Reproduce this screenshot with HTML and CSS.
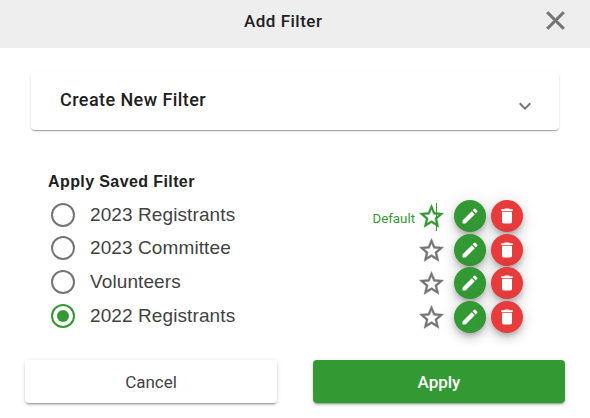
FILE: index.html
```html
<!DOCTYPE html>
<html lang="en">
<head>
<meta charset="utf-8">
<title>Add Filter</title>
<link rel="stylesheet" href="styles.css">
</head>
<body>
<main class="dialog">
  <header class="head">
    <h1 class="title">Add Filter</h1>
    <button class="close" aria-label="Close">
      <svg viewBox="0 0 24 24" width="31" height="31"><path fill="#757575" d="M19 6.41 17.59 5 12 10.59 6.41 5 5 6.41 10.59 12 5 17.59 6.41 19 12 13.41 17.59 19 19 17.59 13.41 12z" stroke="#757575" stroke-width=".5"/></svg>
    </button>
  </header>
  <section class="card">
    <span class="card-title">Create New Filter</span>
    <svg class="chev" viewBox="0 0 24 24" width="24" height="24"><path fill="#757575" d="M16.59 8.59 12 13.17 7.41 8.59 6 10l6 6 6-6z"/></svg>
  </section>
  <section class="saved">
    <h2 class="saved-title">Apply Saved Filter</h2>
    <div class="rows">
      <div class="row">
        <span class="radio"></span><span class="label">2023 Registrants</span>
        <span class="default">Default</span>
        <span class="star-mark">
          <svg class="star star-on" viewBox="0 0 24 24" width="29" height="29"><path d="M22 9.24l-7.19-.62L12 2 9.19 8.63 2 9.24l5.46 4.73L5.82 21 12 17.27 18.18 21l-1.63-7.03L22 9.24zM12 15.4l-3.76 2.27 1-4.28-3.32-2.88 4.38-.38L12 6.1l1.71 4.04 4.38.38-3.32 2.88 1 4.28L12 15.4z"/></svg>
        </span>
        <button class="fab edit" aria-label="Edit"><svg viewBox="0 0 24 24" width="20" height="20"><path d="M3 17.25V21h3.75L17.81 9.94l-3.75-3.75L3 17.25zM20.71 7.04a1 1 0 0 0 0-1.41l-2.34-2.34a1 1 0 0 0-1.41 0l-1.83 1.83 3.75 3.75 1.83-1.83z"/></svg></button>
        <button class="fab del" aria-label="Delete"><svg viewBox="0 0 24 24" width="20" height="20"><path d="M6 19c0 1.1.9 2 2 2h8c1.1 0 2-.9 2-2V7H6v12zM19 4h-3.5l-1-1h-5l-1 1H5v2h14V4z"/></svg></button>
      </div>
      <div class="row">
        <span class="radio"></span><span class="label">2023 Committee</span>
        <svg class="star" viewBox="0 0 24 24" width="29" height="29"><path d="M22 9.24l-7.19-.62L12 2 9.19 8.63 2 9.24l5.46 4.73L5.82 21 12 17.27 18.18 21l-1.63-7.03L22 9.24zM12 15.4l-3.76 2.27 1-4.28-3.32-2.88 4.38-.38L12 6.1l1.71 4.04 4.38.38-3.32 2.88 1 4.28L12 15.4z"/></svg>
        <button class="fab edit" aria-label="Edit"><svg viewBox="0 0 24 24" width="20" height="20"><path d="M3 17.25V21h3.75L17.81 9.94l-3.75-3.75L3 17.25zM20.71 7.04a1 1 0 0 0 0-1.41l-2.34-2.34a1 1 0 0 0-1.41 0l-1.83 1.83 3.75 3.75 1.83-1.83z"/></svg></button>
        <button class="fab del" aria-label="Delete"><svg viewBox="0 0 24 24" width="20" height="20"><path d="M6 19c0 1.1.9 2 2 2h8c1.1 0 2-.9 2-2V7H6v12zM19 4h-3.5l-1-1h-5l-1 1H5v2h14V4z"/></svg></button>
      </div>
      <div class="row">
        <span class="radio"></span><span class="label">Volunteers</span>
        <svg class="star" viewBox="0 0 24 24" width="29" height="29"><path d="M22 9.24l-7.19-.62L12 2 9.19 8.63 2 9.24l5.46 4.73L5.82 21 12 17.27 18.18 21l-1.63-7.03L22 9.24zM12 15.4l-3.76 2.27 1-4.28-3.32-2.88 4.38-.38L12 6.1l1.71 4.04 4.38.38-3.32 2.88 1 4.28L12 15.4z"/></svg>
        <button class="fab edit" aria-label="Edit"><svg viewBox="0 0 24 24" width="20" height="20"><path d="M3 17.25V21h3.75L17.81 9.94l-3.75-3.75L3 17.25zM20.71 7.04a1 1 0 0 0 0-1.41l-2.34-2.34a1 1 0 0 0-1.41 0l-1.83 1.83 3.75 3.75 1.83-1.83z"/></svg></button>
        <button class="fab del" aria-label="Delete"><svg viewBox="0 0 24 24" width="20" height="20"><path d="M6 19c0 1.1.9 2 2 2h8c1.1 0 2-.9 2-2V7H6v12zM19 4h-3.5l-1-1h-5l-1 1H5v2h14V4z"/></svg></button>
      </div>
      <div class="row">
        <span class="radio radio-on"></span><span class="label">2022 Registrants</span>
        <svg class="star" viewBox="0 0 24 24" width="29" height="29"><path d="M22 9.24l-7.19-.62L12 2 9.19 8.63 2 9.24l5.46 4.73L5.82 21 12 17.27 18.18 21l-1.63-7.03L22 9.24zM12 15.4l-3.76 2.27 1-4.28-3.32-2.88 4.38-.38L12 6.1l1.71 4.04 4.38.38-3.32 2.88 1 4.28L12 15.4z"/></svg>
        <button class="fab edit" aria-label="Edit"><svg viewBox="0 0 24 24" width="20" height="20"><path d="M3 17.25V21h3.75L17.81 9.94l-3.75-3.75L3 17.25zM20.71 7.04a1 1 0 0 0 0-1.41l-2.34-2.34a1 1 0 0 0-1.41 0l-1.83 1.83 3.75 3.75 1.83-1.83z"/></svg></button>
        <button class="fab del" aria-label="Delete"><svg viewBox="0 0 24 24" width="20" height="20"><path d="M6 19c0 1.1.9 2 2 2h8c1.1 0 2-.9 2-2V7H6v12zM19 4h-3.5l-1-1h-5l-1 1H5v2h14V4z"/></svg></button>
      </div>
    </div>
  </section>
  <footer class="actions">
    <button class="btn btn-cancel">Cancel</button>
    <button class="btn btn-apply">Apply</button>
  </footer>
</main>
</body>
</html>
```
FILE: styles.css
```css
* { box-sizing: border-box; }
html, body { margin: 0; padding: 0; background: #fff; }
body { width: 590px; height: 418px; overflow: hidden; font-family: Roboto, "Liberation Sans", sans-serif; color: #212121; }
button { font-family: inherit; border: 0; padding: 0; cursor: pointer; }
.dialog { display: flex; flex-direction: column; height: 100%; }
.head { height: 48px; background: #eeeeee; display: flex; align-items: center; padding-left: 244px; position: relative; flex: none; }
.title { margin: 0 0 0 0; font-size: 17px; font-weight: 500; letter-spacing: 0.5px; color: #212121; margin-top: -6px; }
.close { position: absolute; right: 19px; top: 5px; width: 31px; height: 31px; background: none; display: flex; }
.card { margin: 24px 31px 0; height: 58px; background: #fff; border-radius: 4px; box-shadow: 0 2px 1px -1px rgba(0,0,0,.2), 0 1px 1px 0 rgba(0,0,0,.14), 0 1px 3px 0 rgba(0,0,0,.12); display: flex; align-items: center; justify-content: space-between; padding: 0 22px 0 29px; flex: none; }
.card-title { font-size: 18px; font-weight: 500; letter-spacing: 0.43px; margin-top: -3px; }
.chev { margin-top: 10px; }
.saved { margin: 42px 0 0 48px; width: 475px; flex: none; }
.saved-title { margin: 0; font-size: 16px; line-height: 20px; font-family: "Liberation Sans", sans-serif; font-weight: 700; letter-spacing: 0.4px; color: #212121; }
.rows { display: flex; flex-direction: column; margin-top: 6px; }
.row { height: 33.6px; display: flex; align-items: center; }
.radio { width: 24px; height: 24px; margin-left: 3px; border: 2px solid #757575; border-radius: 50%; flex: none; display: flex; align-items: center; justify-content: center; }
.radio-on { border-color: #339933; }
.radio-on::after { content: ""; width: 12px; height: 12px; border-radius: 50%; background: #339933; }
.label { margin-left: 15px; font-size: 19px; letter-spacing: 0.1px; font-family: "Liberation Sans", sans-serif; color: #424242; }
.default { margin-left: auto; font-size: 13.3px; color: #339933; margin-right: 2px; margin-top: 7px; }
.star-mark { position: relative; display: flex; flex: none; }
.star-mark::after { content: ""; position: absolute; left: 19px; top: 5px; width: 1px; height: 28px; background: #339933; }
.star { margin-left: auto; margin-top: 4px; fill: #757575; stroke: #757575; stroke-width: .35; flex: none; }
.star-on { fill: #339933; stroke: #339933; margin-left: 0; }
.fab { width: 32px; height: 32px; border-radius: 50%; margin-left: 8px; display: flex; align-items: center; justify-content: center; fill: #fff; flex: none; box-shadow: 0 3px 5px -1px rgba(0,0,0,.2), 0 6px 10px 0 rgba(0,0,0,.14), 0 1px 18px 0 rgba(0,0,0,.12); margin-top: 3px; }
.fab + .fab { margin-left: 5px; }
.edit { background: #339933; }
.del { background: #e83b3b; }
.actions { margin: 28px 25px 0; display: flex; justify-content: space-between; flex: none; }
.btn { width: 252px; height: 43px; border-radius: 4px; font-size: 17px; box-shadow: 0 3px 1px -2px rgba(0,0,0,.2), 0 2px 2px 0 rgba(0,0,0,.14), 0 1px 5px 0 rgba(0,0,0,.12); }
.btn-cancel { background: #fff; color: #424242; }
.btn-apply { background: #339933; color: #fff; font-weight: 500; }
```
